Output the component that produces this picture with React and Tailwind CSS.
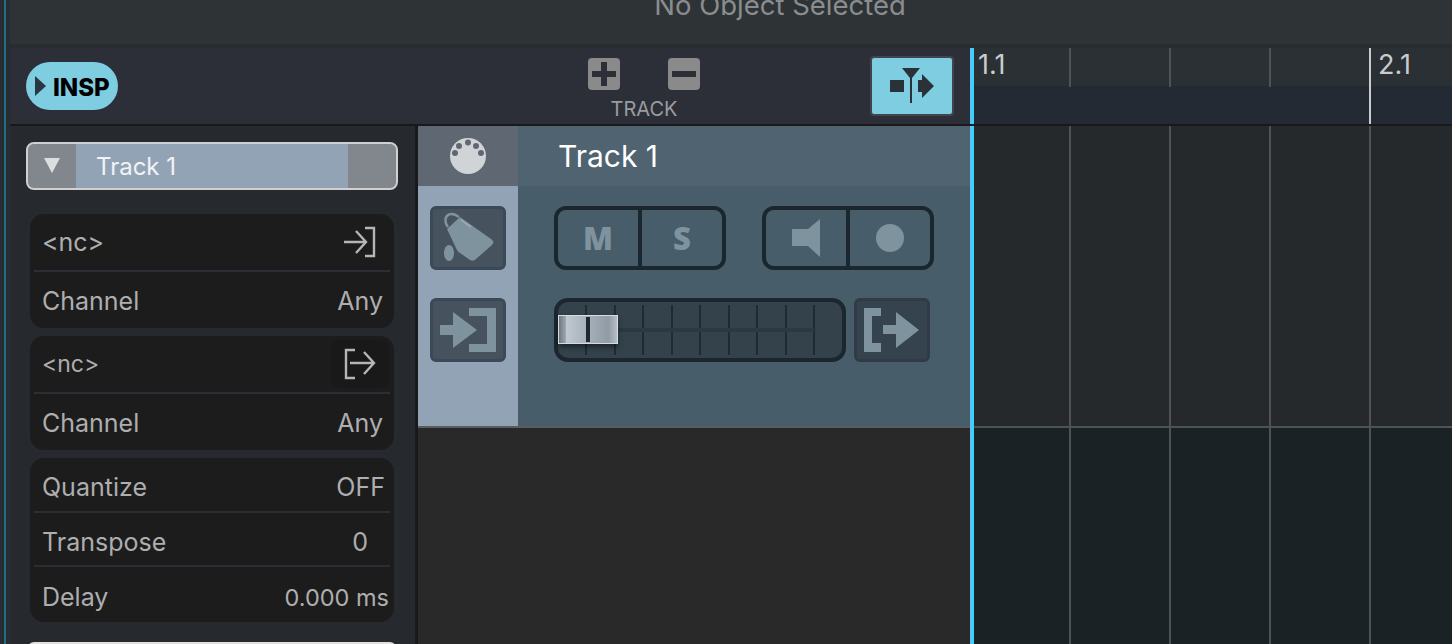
import React from "react";

const font = { fontFamily: "Inter, sans-serif" };

function Row({ label, value, small, icon, last, className = "" }) {
    return (
        <div className={`mx-[4px] flex items-center justify-between pl-[8px] ${last ? "" : "border-b-2 border-[#2b2e35]"} ${className}`}>
            <span className={small ? "text-[23px] leading-none" : "text-[25px] leading-none"}>{label}</span>
            {icon || <span className="pr-[7px] text-[25px] leading-none">{value}</span>}
        </div>
    );
}

function MidiPanel({ icon, small }) {
    return (
        <div className="grid h-[114px] shrink-0 grid-rows-[58px_56px] rounded-[14px] bg-[#1c1c1d] text-[#aeaeae]">
            <Row label="<nc>" small={small} icon={icon} />
            <Row label="Channel" value="Any" className="pt-[2px]" last />
        </div>
    );
}

function InArrow() {
    return (
        <svg viewBox="0 0 32 32" className="h-[32px] w-[32px]" fill="none" stroke="#b5b5b5" strokeWidth="2.4">
            <path d="M0 16h22M12 5l10 11-10 11M21 2h9v28h-9" />
        </svg>
    );
}

function OutArrow() {
    return (
        <svg viewBox="0 0 32 32" className="h-[32px] w-[32px]" fill="none" stroke="#b5b5b5" strokeWidth="2.4">
            <path d="M11 2H2v28h9M6 15h24M20 4l10 11-10 11" />
        </svg>
    );
}

function FaderTicks() {
    return (
        <div className="absolute inset-y-[3px] left-[27px] flex">
            {[29, 28, 29, 28, 29, 28, 29, 28, 2].map((w, i) => (
                <div key={i} style={{ width: w }} className="border-l-2 border-[#1f2a31]" />
            ))}
        </div>
    );
}

function FaderThumb() {
    return (
        <div className="absolute left-0 top-[13px] flex h-[29px] w-[60px] border border-[#d5dbe0] shadow-[0_3px_5px_rgba(0,0,0,0.45)]">
            <div className="w-[7px] shrink-0 bg-gradient-to-r from-[#6f787f] to-[#a0a9b1]" />
            <div className="flex w-[42px] shrink-0 items-center bg-gradient-to-r from-[#c0c8d0] to-[#8f9ba6] pl-[20px]">
                <div className="h-[25px] w-[4px] shrink-0 bg-[#1e2831]" />
            </div>
            <div className="flex-1 bg-gradient-to-r from-[#8f9aa3] to-[#b6bec6]" />
        </div>
    );
}

function SideButton({ className, children }) {
    return (
        <div className={`flex h-[64px] w-[76px] shrink-0 items-center justify-center rounded-[6px] border-[3px] ${className}`}>
            <svg viewBox="0 0 70 58" className="h-[58px] w-[70px]">
                {children}
            </svg>
        </div>
    );
}

function TrackHeader() {
    return (
        <div className="flex h-[300px] w-[552px] shrink-0 bg-[#485d6a]">
            <div className="flex w-[100px] flex-col bg-[#93a3b6]">
                <div className="flex h-[60px] items-center justify-center bg-[#5f6872]">
                    <svg viewBox="0 0 36 36" className="h-[36px] w-[36px]">
                        <circle cx="18" cy="18" r="18" fill="#d0d4d7" />
                        <g fill="#5f6872">
                            <circle cx="5" cy="15" r="3" />
                            <circle cx="9" cy="8" r="3" />
                            <circle cx="18" cy="4.5" r="3" />
                            <circle cx="26" cy="8" r="3" />
                            <circle cx="31" cy="15" r="3" />
                        </g>
                    </svg>
                </div>
                <div className="flex flex-col items-center gap-[28px] pt-[20px]">
                    <SideButton className="border-[#3b4855] bg-[#46525e]">
                        <path d="M15 18C11 13 12 7 16 5.500 19 4 22 5 26 8" fill="none" stroke="#7f939e" strokeWidth="2.5" />
                        <path d="M14 20L27 8l31 22c3 2 3 4 1 6L43 50c-2 2-4 2-6 1l-10-7c-2-1-3-3-4-5z" fill="#7f939e" />
                        <path d="M28 11l10 7" fill="none" stroke="#a0b0ba" strokeWidth="1.500" />
                        <ellipse cx="16" cy="44" rx="5" ry="8" fill="#7f939e" />
                    </SideButton>
                    <SideButton className="border-[#3b4855] bg-[#46525e]">
                        <path d="M7 24h13V11l24 18-24 18V34H7z" fill="#7f939e" />
                        <path d="M36 7h27v44H36v-8h18V15H36z" fill="#7f939e" />
                    </SideButton>
                </div>
            </div>
            <div className="flex flex-1 flex-col">
                <div className="flex h-[60px] items-center bg-[#4f6371] pl-[40px]">
                    <span className="text-[30px] text-white">Track 1</span>
                </div>
                <div className="flex gap-[36px] pl-[36px] pt-[20px]">
                    <div className="flex h-[64px] w-[172px] rounded-[12px] border-4 border-[#1b272e] text-[#7f939e]" style={{ fontFamily: "'Open Sans', sans-serif" }}>
                        <div className="flex w-[84px] items-center justify-center border-r-4 border-[#1b272e] text-[31px] font-extrabold">M</div>
                        <div className="flex flex-1 items-center justify-center text-[31px] font-extrabold">S</div>
                    </div>
                    <div className="flex h-[64px] w-[172px] rounded-[12px] border-4 border-[#1b272e]">
                        <div className="flex w-[84px] items-center justify-center border-r-4 border-[#1b272e]">
                            <svg viewBox="0 0 28 38" className="h-[38px] w-[28px]">
                                <path d="M0 10h16L28 0v38L16 27H0z" fill="#7f939e" />
                            </svg>
                        </div>
                        <div className="flex flex-1 items-center justify-center">
                            <div className="h-[28px] w-[28px] rounded-full bg-[#7f939e]" />
                        </div>
                    </div>
                </div>
                <div className="flex gap-[8px] pl-[36px] pt-[28px]">
                    <div className="relative h-[64px] w-[292px] rounded-[14px] border-4 border-[#1b272e] bg-[#33424b]">
                        <FaderTicks />
                        <div className="absolute left-[60px] right-[28px] top-[26px] h-[4px] bg-[#2c3941]" />
                        <FaderThumb />
                    </div>
                    <SideButton className="border-[#2f3c46] bg-[#34434d]">
                        <path d="M7 7h17v8h-9v27h9v9H7z" fill="#7f939e" />
                        <path d="M26 24h13V11l23 18-23 18V33H26z" fill="#7f939e" />
                    </SideButton>
                </div>
            </div>
        </div>
    );
}

function GridCells({ className }) {
    return (
        <div className={`flex ${className}`}>
            <div className="w-[97px] shrink-0 border-r-2 border-[#4f5356]" />
            <div className="w-[100px] shrink-0 border-r-2 border-[#4f5356]" />
            <div className="w-[100px] shrink-0 border-r-2 border-[#4f5356]" />
            <div className="w-[100px] shrink-0 border-r-2 border-[#4f5356]" />
            <div className="flex-1" />
        </div>
    );
}

function Playhead() {
    return <div className="w-[4px] shrink-0 border-l border-[#7fb0e8] bg-[#35d4ff]" />;
}

export default function App() {
    return (
        <div style={font} className="flex h-[644px] w-[1452px] overflow-hidden bg-[#26282c]">
            <div className="w-[4px] shrink-0 bg-[#292d31]" />
            <div className="w-[2px] shrink-0 bg-[#1f6f8a]" />
            <div className="w-[4px] shrink-0 bg-[#292d31]" />
            <div className="flex min-w-0 flex-1 flex-col">
                {/* title strip */}
                <div className="flex h-[44px] shrink-0 items-start justify-center overflow-hidden bg-[#2e3336] pl-[98px]">
                    <span className="-mt-[10px] text-[27.5px] leading-[30px] text-[#8a8d8f]">No Object Selected</span>
                </div>
                <div className="h-[4px] shrink-0 bg-[#292c30]" />

                {/* toolbar */}
                <div className="flex h-[76px] shrink-0">
                    <div className="relative flex w-[960px] shrink-0 bg-[#2c2f38] pl-[16px]">
                        <div className="mt-[14px] flex h-[48px] w-[92px] items-center rounded-full bg-[#7ecde1] pl-[9px]">
                            <div className="h-0 w-0 border-y-[10px] border-l-[11px] border-y-transparent border-l-[#2a3640]" />
                            <span className="ml-[7px] pt-[3px] text-[24px] font-extrabold leading-none text-black">INSP</span>
                        </div>
                        <div className="absolute left-[578px] top-[10px] flex flex-col items-center">
                            <div className="flex gap-[48px]">
                                <div className="flex h-[32px] w-[32px] items-center justify-center rounded-[4px] bg-[#8a8a8a]">
                                    <svg viewBox="0 0 24 24" className="h-[24px] w-[24px]"><path d="M9 0h6v9h9v6h-9v9H9v-9H0V9h9z" fill="#2c2f38" /></svg>
                                </div>
                                <div className="flex h-[32px] w-[32px] items-center justify-center rounded-[4px] bg-[#8a8a8a]">
                                    <svg viewBox="0 0 24 24" className="h-[24px] w-[24px]"><path d="M0 9h24v6H0z" fill="#2c2f38" /></svg>
                                </div>
                            </div>
                            <span className="mt-[9px] text-[20px] leading-none text-[#9a9c9f]">TRACK</span>
                        </div>
                        <div className="absolute right-[16px] top-[8px] flex h-[60px] w-[84px] items-center justify-center rounded-[4px] border-2 border-[#41454d] bg-[#7ecde1]">
                            <svg viewBox="0 0 44 36" className="h-[36px] w-[44px]">
                                <path d="M0 12h14v12H0z" fill="#2b3138" />
                                <path d="M12 0h18l-8 10v25h-2V10z" fill="#2b3138" />
                                <path d="M28 12h4V6l12 12-12 12v-6h-4z" fill="#2b3138" />
                            </svg>
                        </div>
                    </div>
                    <Playhead />
                    <div className="relative min-w-0 flex-1 bg-gradient-to-b from-[#2a3033] from-50% to-[#232a33] to-50%">
                        <GridCells className="h-[39px] w-full" />
                        <div className="absolute left-[395px] top-0 h-full w-[2px] bg-[#c8cccd]" />
                        <span className="absolute left-[4px] top-[1px] text-[27px] leading-[32px] text-[#c9cccd]">1.1</span>
                        <span className="absolute left-[404px] top-[1px] text-[27px] leading-[32px] text-[#c9cccd]">2.1</span>
                    </div>
                </div>
                <div className="h-[2px] shrink-0 bg-[#17191b]" />

                {/* main */}
                <div className="flex min-h-0 flex-1">
                    {/* inspector */}
                    <div className="flex w-[405px] shrink-0 flex-col bg-[#26292e] pl-[16px] pt-[16px]">
                        <div className="flex h-[48px] w-[372px] shrink-0 overflow-hidden rounded-[8px] border-2 border-[#d0d0d0] bg-[#93a3b6] text-[#f1f3f5]">
                            <div className="flex w-[48px] items-start justify-center bg-[#82878e] pt-[14px]">
                                <div className="h-0 w-0 border-x-[8px] border-t-[15px] border-x-transparent border-t-[#dcdedf]" />
                            </div>
                            <div className="flex flex-1 items-center pl-[20px] pt-[2px] text-[24px]">Track 1</div>
                            <div className="w-[48px] bg-[#82878e]" />
                        </div>
                        <div className="ml-[4px] mt-[24px] flex w-[364px] shrink-0 flex-col gap-[8px]">
                            <MidiPanel icon={<div className="pr-[14px]"><InArrow /></div>} />
                            <MidiPanel
                                small
                                icon={
                                    <div className="flex h-[48px] w-[60px] items-center justify-center rounded-[10px] bg-[#191919]">
                                        <OutArrow />
                                    </div>
                                }
                            />
                            <div className="grid h-[164px] grid-rows-[55px_54px_55px] rounded-[14px] bg-[#1c1c1d] text-[#aeaeae]">
                                <Row label="Quantize" value={<span className="-mr-[2px]">OFF</span>} className="pt-[6px]" />
                                <Row label="Transpose" value={<span className="pr-[15px]">0</span>} className="pt-[7px]" />
                                <div className="mx-[4px] flex items-center justify-between pl-[8px] pt-[6px]">
                                    <span className="text-[25px] leading-none">Delay</span>
                                    <span className="pr-[1px] text-[23.5px] leading-none">0.000 ms</span>
                                </div>
                            </div>
                        </div>
                        <div className="ml-[2px] mt-[20px] h-[10px] w-[368px] shrink-0 rounded-t-[6px] bg-[#e0e0e0]" />
                    </div>
                    <div className="w-[3px] shrink-0 bg-[#17191b]" />

                    {/* track list */}
                    <div className="flex w-[552px] shrink-0 flex-col bg-[#292929]">
                        <TrackHeader />
                        <div className="h-[2px] shrink-0 bg-[#5a5d5f]" />
                    </div>
                    <Playhead />

                    {/* arrangement */}
                    <div className="flex min-w-0 flex-1 flex-col bg-[#1d2427]">
                        <GridCells className="h-[300px] shrink-0 bg-[#26292b]" />
                        <div className="h-[2px] shrink-0 bg-[#4f5356]" />
                        <GridCells className="flex-1 bg-[#1b2225]" />
                    </div>
                </div>
            </div>
        </div>
    );
}
